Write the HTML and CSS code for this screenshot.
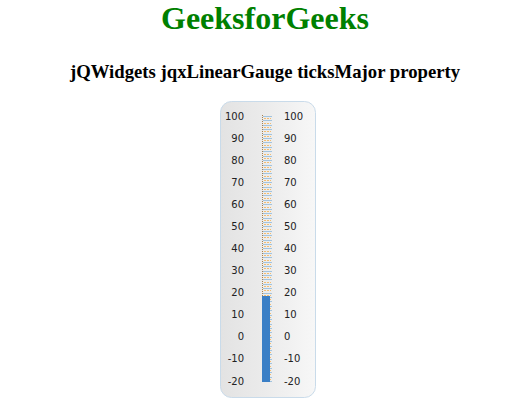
FILE: index.html
```html
<!DOCTYPE html>
<html>
<head>
<meta charset="utf-8">
<link rel="stylesheet" href="styles.css">
</head>
<body>
<h1 class="title">GeeksforGeeks</h1>
<h3 class="subtitle">jQWidgets jqxLinearGauge ticksMajor property</h3>
<div class="gauge">
<svg width="96" height="297" viewBox="0 0 96 297" xmlns="http://www.w3.org/2000/svg">
  <defs>
    <linearGradient id="bg" x1="0" y1="0" x2="1" y2="0">
      <stop offset="0" stop-color="#e3e3e3"/>
      <stop offset="0.45" stop-color="#ebebeb"/>
      <stop offset="1" stop-color="#f7f7f7"/>
    </linearGradient>
  </defs>
  <rect x="0.5" y="0.5" width="95" height="296" rx="11" ry="11" fill="url(#bg)" stroke="#c9dbea"/>
  <g id="ticks"></g>
  <line x1="42.5" y1="14" x2="42.5" y2="281" stroke="#a8814f" stroke-dasharray="1 1"/>
  <rect x="42" y="195" width="8" height="86" fill="#3a7fc6"/>
  <g class="lbl-left" text-anchor="end"></g>
  <g class="lbl-right" text-anchor="start"></g>
</svg>
</div>
<script src="script.js"></script>
</body>
</html>
```

FILE: styles.css
```css
body {
  margin: 0;
  font-family: "Liberation Serif", serif;
}
.title {
  margin: 0;
  font-size: 32px;
  line-height: 37px;
  color: green;
  text-align: center;
}
.subtitle {
  margin: 24px 0 0 0;
  font-size: 18.72px;
  line-height: 21px;
  text-align: center;
  color: #000;
}
.gauge {
  margin: 19px 0 0 220px;
  width: 96px;
  height: 297px;
}
.gauge svg {
  display: block;
}
.gauge text {
  font-family: "DejaVu Sans", sans-serif;
  font-size: 10px;
  fill: #222;
}
```

FILE: script.js
```js
(function () {
  var ns = "http://www.w3.org/2000/svg";
  function y(v) { return 15 + (100 - v) * 2.208; }
  var ticks = document.getElementById("ticks");
  for (var v = 100; v >= -20; v--) {
    var l = document.createElementNS(ns, "line");
    var yy = Math.round(y(v)) + 0.5;
    l.setAttribute("y1", yy);
    l.setAttribute("y2", yy);
    if (v % 2 === 0) {
      l.setAttribute("x1", 43);
      l.setAttribute("x2", 52);
      l.setAttribute("stroke", "#a3c4de");
    } else {
      l.setAttribute("x1", 44);
      l.setAttribute("x2", 51);
      l.setAttribute("stroke", "#f2bd72");
      l.setAttribute("stroke-dasharray", "2 1");
    }
    ticks.appendChild(l);
  }
  var left = document.querySelector(".lbl-left");
  var right = document.querySelector(".lbl-right");
  for (var k = 100; k >= -20; k -= 10) {
    var t1 = document.createElementNS(ns, "text");
    t1.setAttribute("x", 24);
    t1.setAttribute("y", y(k) + 3.6);
    t1.textContent = String(k);
    left.appendChild(t1);
    var t2 = document.createElementNS(ns, "text");
    t2.setAttribute("x", 64);
    t2.setAttribute("y", y(k) + 3.6);
    t2.textContent = String(k);
    right.appendChild(t2);
  }
})();
```
